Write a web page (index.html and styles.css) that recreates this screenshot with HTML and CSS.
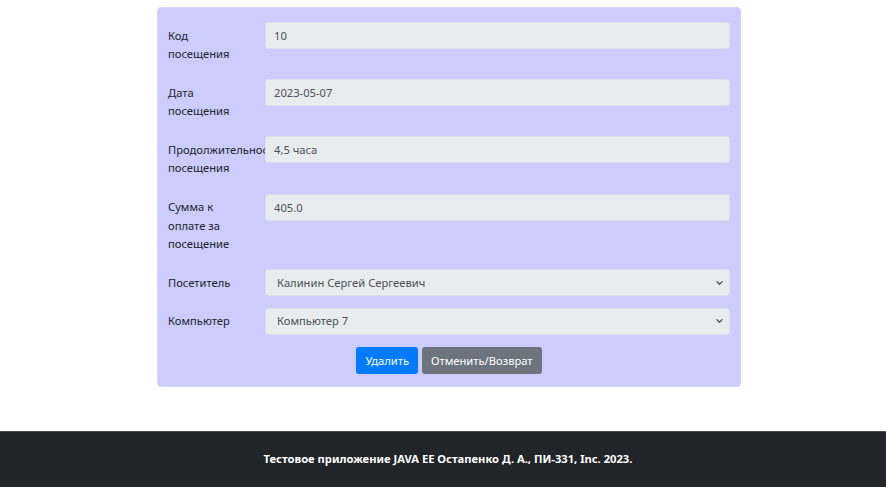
FILE: index.html
```html
<!DOCTYPE html>
<html lang="ru">
<head>
<meta charset="utf-8">
<title>Посещение</title>
<link rel="stylesheet" href="styles.css">
</head>
<body>
<main class="page">
  <form class="card">
    <div class="row">
      <label class="label">Код посещения</label>
      <input class="control" type="text" value="10" readonly>
    </div>
    <div class="row">
      <label class="label">Дата посещения</label>
      <input class="control" type="text" value="2023-05-07" readonly>
    </div>
    <div class="row">
      <label class="label clip">Продолжительность посещения</label>
      <input class="control" type="text" value="4,5 часа" readonly>
    </div>
    <div class="row">
      <label class="label">Сумма к оплате за посещение</label>
      <input class="control" type="text" value="405.0" readonly>
    </div>
    <div class="row">
      <label class="label">Посетитель</label>
      <div class="control select"><span>Калинин Сергей Сергеевич</span>
        <svg class="chev" width="7" height="6" viewBox="0 0 16 14"><path d="M2 4l6 6 6-6" fill="none" stroke="#343a40" stroke-width="2.6" stroke-linecap="round" stroke-linejoin="round"/></svg>
      </div>
    </div>
    <div class="row">
      <label class="label">Компьютер</label>
      <div class="control select"><span>Компьютер 7</span>
        <svg class="chev" width="7" height="6" viewBox="0 0 16 14"><path d="M2 4l6 6 6-6" fill="none" stroke="#343a40" stroke-width="2.6" stroke-linecap="round" stroke-linejoin="round"/></svg>
      </div>
    </div>
    <div class="actions">
      <button type="button" class="btn btn-primary">Удалить</button>
      <button type="button" class="btn btn-secondary">Отменить/Возврат</button>
    </div>
  </form>
</main>
<footer class="footer">
  <p>Тестовое приложение JAVA EE Остапенко Д. А., ПИ-331, Inc. 2023.</p>
</footer>
</body>
</html>
```
FILE: styles.css
```css
* { box-sizing: border-box; }
html, body { margin: 0; padding: 0; }
body {
  font-family: "Noto Sans", "Open Sans", sans-serif;
  font-size: 11.2px;
  line-height: 1.65;
  color: #212529;
  background: #fff;
  height: 487px;
  display: flex;
  flex-direction: column;
}
.page {
  flex: 1;
  display: flex;
  justify-content: center;
  padding-top: 7px;
  padding-left: 12px;
}
.card {
  width: 584px;
  height: 380px;
  background: #ccccff;
  border: 1px solid #d4d4fb;
  border-radius: 4px;
  padding: 14px 10px 0 10px;
  margin: 0;
}
.row {
  display: grid;
  grid-template-columns: 97px 1fr;
  align-items: start;
  margin-bottom: 11.2px;
}
.label {
  padding: 4.5px 0;
  line-height: 18.5px;
  width: 76px;
  color: #212529;
}
.clip {
  width: 97px;
  overflow: hidden;
  padding-right: 21px;
  margin-right: -21px;
}
.control {
  height: 27px;
  width: 100%;
  border: 1px solid #dcdfe3;
  border-radius: 3px;
  background: #e9ecef;
  font: inherit;
  color: #495057;
  padding: 0 8px;
  margin: 0;
  outline: none;
}
.select {
  display: flex;
  align-items: center;
  justify-content: space-between;
  padding: 0 6px 0 11px;
}
.chev { display: block; }
.actions {
  display: flex;
  justify-content: center;
  gap: 4px;
}
.btn {
  height: 27px;
  border: none;
  border-radius: 3px;
  color: #fff;
  font: inherit;
  padding: 0 9px;
  line-height: 27px;
}
.btn-primary { background: #007bff; }
.btn-secondary { background: #6c757d; }
.footer {
  height: 56px;
  background: #212529;
  border-top: 1px solid #454b52;
  display: flex;
  align-items: center;
  justify-content: center;
  padding-left: 10px;
}
.footer p {
  margin: 0;
  color: #fff;
  font-weight: bold;
  font-size: 11.2px;
}
```
